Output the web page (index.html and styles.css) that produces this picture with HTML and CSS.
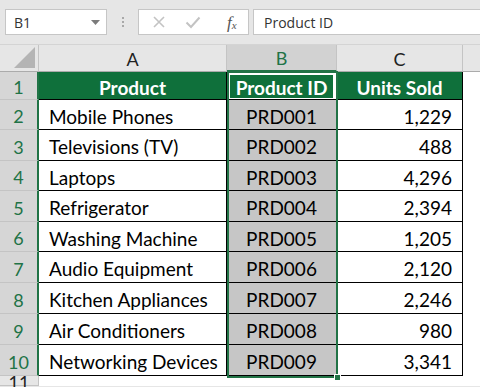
FILE: index.html
```html
<!DOCTYPE html>
<html>
<head>
<meta charset="utf-8">
<link rel="stylesheet" href="styles.css">
</head>
<body>
<div class="toolbar">
  <div class="namebox">
    <span>B1</span>
    <svg class="caret" width="9" height="5" viewBox="0 0 9 5"><path d="M0 0H9L4.5 5Z" fill="#7b7b7b"/></svg>
  </div>
  <div class="grip"><i></i><i></i><i></i></div>
  <div class="fxbox">
    <svg width="14" height="14" viewBox="0 0 14 14"><path d="M2 2L12 12M12 2L2 12" stroke="#c3c3c3" stroke-width="1.6" fill="none"/></svg>
    <svg width="16" height="14" viewBox="0 0 16 14"><path d="M1.5 7.5L6 12L14.5 2.5" stroke="#c3c3c3" stroke-width="2" fill="none"/></svg>
    <span class="fx">f<sub>x</sub></span>
  </div>
  <div class="formula">Product ID</div>
</div>
<div class="sheet">
  <div class="grid">
    <div class="corner"><svg width="21" height="21" viewBox="0 0 21 21"><path d="M21 0V21H0Z" fill="#b4b4b4"/></svg></div>
    <div class="colhdr">A</div>
    <div class="colhdr sel">B</div>
    <div class="colhdr">C</div>
    <div class="colhdr last"></div>

    <div class="rowhdr sel">1</div>
    <div class="cell head">Product</div>
    <div class="cell head mid active">Product ID</div>
    <div class="cell head">Units Sold</div>
    <div class="blank"></div>

    <div class="rowhdr sel">2</div>
    <div class="cell">Mobile Phones</div>
    <div class="cell mid shade">PRD001</div>
    <div class="cell num">1,229</div>
    <div class="blank"></div>

    <div class="rowhdr sel">3</div>
    <div class="cell">Televisions (TV)</div>
    <div class="cell mid shade">PRD002</div>
    <div class="cell num">488</div>
    <div class="blank"></div>

    <div class="rowhdr sel">4</div>
    <div class="cell">Laptops</div>
    <div class="cell mid shade">PRD003</div>
    <div class="cell num">4,296</div>
    <div class="blank"></div>

    <div class="rowhdr sel">5</div>
    <div class="cell">Refrigerator</div>
    <div class="cell mid shade">PRD004</div>
    <div class="cell num">2,394</div>
    <div class="blank"></div>

    <div class="rowhdr sel">6</div>
    <div class="cell">Washing Machine</div>
    <div class="cell mid shade">PRD005</div>
    <div class="cell num">1,205</div>
    <div class="blank"></div>

    <div class="rowhdr sel">7</div>
    <div class="cell">Audio Equipment</div>
    <div class="cell mid shade">PRD006</div>
    <div class="cell num">2,120</div>
    <div class="blank"></div>

    <div class="rowhdr sel">8</div>
    <div class="cell">Kitchen Appliances</div>
    <div class="cell mid shade">PRD007</div>
    <div class="cell num">2,246</div>
    <div class="blank"></div>

    <div class="rowhdr sel">9</div>
    <div class="cell">Air Conditioners</div>
    <div class="cell mid shade">PRD008</div>
    <div class="cell num">980</div>
    <div class="blank"></div>

    <div class="rowhdr sel">10</div>
    <div class="cell">Networking Devices</div>
    <div class="cell mid shade">PRD009</div>
    <div class="cell num">3,341</div>
    <div class="blank"></div>

    <div class="rowhdr">11</div>
    <div class="blank"></div>
    <div class="blank"></div>
    <div class="blank"></div>
    <div class="blank"></div>
  </div>
  <div class="selection"><span class="handle"></span></div>
</div>
</body>
</html>
```
FILE: styles.css
```css
* { box-sizing: border-box; }
html, body { margin: 0; padding: 0; }
body {
  width: 480px;
  height: 387px;
  overflow: hidden;
  background: #e6e6e6;
  font-family: Lato, "Liberation Sans", sans-serif;
}
.toolbar {
  height: 45px;
  display: flex;
  align-items: flex-start;
  padding: 9px 0 0 5px;
  border-bottom: 1px solid #d4d4d4;
}
.namebox {
  width: 102px;
  height: 26px;
  background: #fff;
  border: 1px solid #c6c6c6;
  display: flex;
  align-items: center;
  justify-content: space-between;
  padding: 0 6px 0 8px;
  font-family: "Open Sans", "Noto Sans", sans-serif;
  font-size: 14px;
  color: #333;
}
.caret { margin-top: 1px; }
.grip {
  width: 31px;
  height: 26px;
  display: flex;
  flex-direction: column;
  align-items: center;
  justify-content: center;
  gap: 2px;
}
.grip i {
  display: block;
  width: 2px;
  height: 2px;
  background: #a8a8a8;
}
.fxbox {
  width: 111px;
  height: 26px;
  background: #fff;
  border: 1px solid #c6c6c6;
  display: flex;
  align-items: center;
  padding: 0 0 0 13px;
  gap: 19px;
}
.fx {
  font-family: "Liberation Serif", serif;
  font-style: italic;
  font-size: 17px;
  color: #555;
  margin-left: 7px;
  line-height: 1;
}
.fx sub { font-size: 11px; vertical-align: -1px; }
.formula {
  flex: 1;
  height: 26px;
  margin-left: 4px;
  background: #fff;
  border: 1px solid #c6c6c6;
  border-right: none;
  display: flex;
  align-items: center;
  padding-left: 10px;
  font-family: "Open Sans", "Noto Sans", sans-serif;
  font-size: 14px;
  color: #333;
}
.sheet {
  position: relative;
}
.grid {
  display: grid;
  grid-template-columns: 39px 188px 110px 126px 1fr;
  grid-template-rows: 27px 28px 30px 31px 30px 31px 30px 31px 31px 31px 31px 10px;
  background: #fff;
}
.corner {
  background: #e6e6e6;
  border-right: 1px solid #c4c4c4;
  border-bottom: 1px solid #ababab;
  display: flex;
  align-items: flex-end;
  justify-content: flex-end;
  padding: 0 3px 3px 0;
}
.colhdr {
  background: #e6e6e6;
  border-right: 1px solid #c4c4c4;
  border-bottom: 1px solid #ababab;
  display: flex;
  align-items: center;
  justify-content: center;
  font-size: 18px;
  color: #222;
  padding-top: 1px;
}
.colhdr.sel {
  background: #d2d2d2;
  color: #217346;
  border-bottom: 2px solid #217346;
}
.colhdr.last { border-right: none; }
.rowhdr {
  background: #e6e6e6;
  border-bottom: 1px solid #c4c4c4;
  border-right: 1px solid #c4c4c4;
  display: flex;
  align-items: center;
  justify-content: center;
  font-size: 18px;
  color: #222;
  padding-top: 3px;
}
.rowhdr.sel {
  background: #d6d6d6;
  color: #217346;
  border-right: 2px solid #217346;
}
.rowhdr:last-of-type {
  align-items: flex-start;
  padding-top: 1px;
  overflow: hidden;
  line-height: 1;
}
.cell {
  border-right: 1px solid #000;
  border-bottom: 1px solid #000;
  display: flex;
  align-items: center;
  padding: 3px 10px 0 10px;
  font-size: 19px;
  color: #000;
  white-space: nowrap;
}
.cell.head {
  background: #0f703b;
  color: #fff;
  font-weight: 700;
  justify-content: center;
}
.cell.mid { justify-content: center; }
.cell.num { justify-content: flex-end; }
.cell.shade { background: #c6c6c6; }
.cell.active {
  box-shadow: inset 3px 0 0 #fff, inset -3px 0 0 #fff, inset 0 3px 0 #fff, inset 0 -1px 0 #fff;
}
.blank { background: #fff; }
.selection {
  position: absolute;
  left: 227px;
  top: 26px;
  width: 111px;
  height: 307px;
  border: 2px solid #217346;
  pointer-events: none;
}
.handle {
  position: absolute;
  right: -5px;
  bottom: -5px;
  width: 7px;
  height: 7px;
  background: #217346;
  border: 1px solid #fff;
}
```
